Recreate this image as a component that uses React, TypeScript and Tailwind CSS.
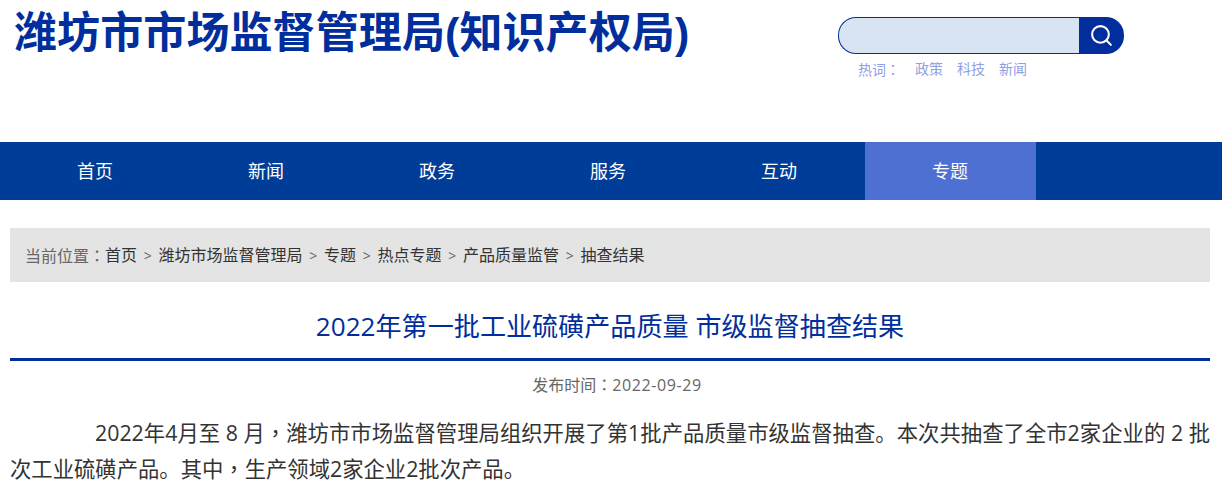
import { Search } from 'lucide-react';

const NAV = ['首页', '新闻', '政务', '服务', '互动', '专题'];
const CRUMBS = ['首页', '潍坊市场监督管理局', '专题', '热点专题', '产品质量监管', '抽查结果'];
const FONT = "font-['Open_Sans','Noto_Sans_CJK_SC',sans-serif]";

// full-width punctuation sits centred in the reference, TC glyphs do that
function Punct({ children }: { children: string }) {
  return <span className="font-['Noto_Sans_CJK_TC',sans-serif]">{children}</span>;
}

export default function App() {
  return (
    <div className={`w-[1222px] h-[482px] overflow-hidden bg-white ${FONT}`}>
      {/* Header */}
      <div className="h-[142px] flex items-start">
        <h1 className="w-[824px] pl-[14px] pt-[4px] text-[43px] leading-[58px] font-bold tracking-[0.1px] text-[#012e9c] whitespace-nowrap font-['Liberation_Sans','Noto_Sans_CJK_SC',sans-serif]">
          潍坊市市场监督管理局(知识产权局)
        </h1>
        <div className="pl-[14px] pt-[17px]">
          <div className="flex w-[286px] h-[37px]">
            <div className="w-[241px] bg-[#d9e4f3] border border-r-0 border-[#012e9c] rounded-l-[18px]" />
            <div className="w-[45px] bg-[#012e9c] rounded-r-[18px] flex items-center pl-[10px]">
              <Search size={25} strokeWidth={2} className="text-white" />
            </div>
          </div>
          <div className="flex pl-[20px] pt-[6px] text-[14px] leading-[18px] text-[#8f9fe3]">
            <span className="w-[57px]">热词<Punct>：</Punct></span>
            <span className="w-[42px]">政策</span>
            <span className="w-[42px]">科技</span>
            <span>新闻</span>
          </div>
        </div>
      </div>

      {/* Nav */}
      <div className="h-[58px] bg-[#003d98] pl-[10px] flex">
        {NAV.map(n => (
          <div key={n} className={`w-[171px] pr-[1px] flex items-center justify-center text-[18px] text-white ${n === '专题' ? 'bg-[#4e70d2]' : ''}`}>
            {n}
          </div>
        ))}
      </div>

      <div className="pl-[10px] pr-[12px] pt-[28px]">
        {/* Breadcrumb */}
        <div className="h-[54px] bg-[#e4e4e4] pl-[15px] flex items-center text-[16px] text-[#333]">
          <span className="text-[#666]">当前位置<Punct>：</Punct></span>
          {CRUMBS.map((c, i) => (
            <span key={c} className="flex items-center">
              {i > 0 && <span className="w-[21.5px] text-center text-[14px] text-[#666]">&gt;</span>}
              {c}
            </span>
          ))}
        </div>

        {/* Article */}
        <h2 className="pt-[24px] pb-[12px] text-center text-[26.1px] leading-[40px] text-[#012e9c] border-b-[3px] border-[#012e9c]">
          2022年第一批工业硫磺产品质量 市级监督抽查结果
        </h2>
        <p className="pt-[11px] pl-[14px] text-center text-[16px] leading-[24px] text-[#666]">
          发布时间<Punct>：</Punct><span className="tracking-[0.6px]">2022-09-29</span>
        </p>
        <p className="pt-[17px] text-[21.33px] leading-[35px] text-[#333] text-justify indent-[85px]">
          2022年4月至 8 月<Punct>，</Punct>潍坊市市场监督管理局组织开展了第1批产品质量市级监督抽查。本次共抽查了全市2家企业的 2 批次工业硫磺产品。其中<Punct>，</Punct>生产领域2家企业2批次产品。
        </p>
      </div>
    </div>
  );
}
